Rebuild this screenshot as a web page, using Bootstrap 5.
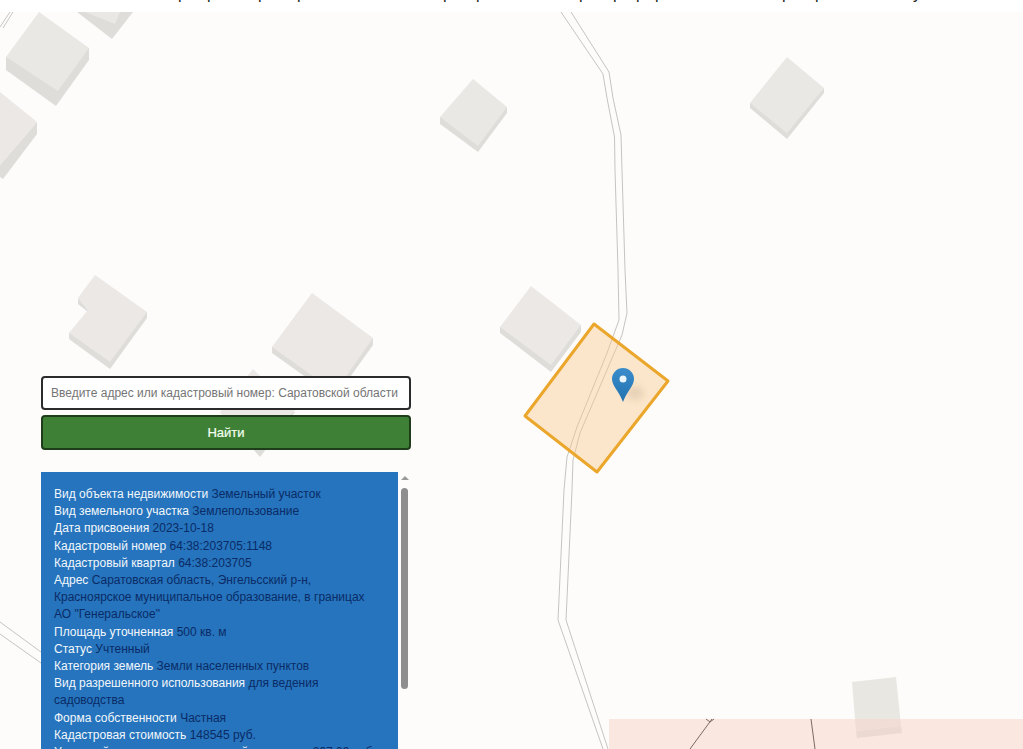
<!DOCTYPE html>
<html lang="ru">
<head>
<meta charset="utf-8">
<title>Кадастровая карта</title>
<link href="https://cdn.jsdelivr.net/npm/bootstrap@5.3.0/dist/css/bootstrap.min.css" rel="stylesheet">
<style>
html,body{height:100%;overflow:hidden;background:#fff;font-family:"Liberation Sans",Arial,sans-serif}
.top-strip{height:12px;overflow:hidden;background:#fff}
.top-strip svg,.map-canvas{display:block}
.top-strip text{font:16px "Liberation Sans",sans-serif;fill:#222}
.map-area{height:737px;background:#fdfcfa}
.roof{fill:#e9e8e4}.roof2{fill:#ebe8e6}.wall{fill:#dedddA}
.road{fill:none;stroke:#c6c4c1;stroke-width:1;stroke-linejoin:round}
.search-panel{left:41px;top:364px;width:370px;bottom:0}
.addr-input{height:34px;border:2px solid #2b2b2b;border-radius:4px;font-size:12px;padding:0 8px;color:#333;background:#fff}
.addr-input::placeholder{color:#757575;opacity:1}
.find-btn{height:35px;margin-top:5px;background:#3f8037;border:2px solid #1f3d1b;border-radius:4px;color:#f2fff0;font-size:13px;font-weight:500;padding:0;-webkit-text-stroke:.2px #f2fff0}
.find-btn:hover{background:#3f8037;color:#f2fff0;border-color:#1f3d1b}
.info-row{margin-top:22px;min-height:0}
.info-box{width:357px;background:#2574bd;padding:14px 15px 0 13px;font-size:12px;line-height:17.2px;color:#0b2b66;overflow:hidden}
.info-box .lab{color:#f3f7fb}
.scroll-col{width:13px;padding-left:3px}
.scroll-up{width:0;height:0;margin:4px 0 0 0;border-left:4px solid transparent;border-right:4px solid transparent;border-bottom:4px solid #9a9a9a}
.scroll-thumb{width:7px;height:201px;margin:8px 0 0 0;background:#8e8e8e;border-radius:4px}
</style>
</head>
<body>
<div class="top-strip">
<svg width="1023" height="12" viewBox="0 0 1023 12" aria-hidden="true"><text y="-1" x="178 207 258 297 443 476 579 613 636 655 782 815 913">рррррррррррру</text></svg>
</div>
<div class="map-area position-relative overflow-hidden">
<svg class="map-canvas" width="1023" height="737" viewBox="0 12 1023 737" aria-hidden="true">
<defs>
<linearGradient id="pinfill" x1="0" y1="0" x2="0" y2="1"><stop offset="0" stop-color="#3b8ccb"/><stop offset="1" stop-color="#2272b0"/></linearGradient>
<filter id="soft" x="-50%" y="-50%" width="200%" height="200%"><feGaussianBlur stdDeviation="3"/></filter>
</defs>
<path class="road" d="M0 27L10 12M3 28L13 12"/>
<path class="road" d="M0 622L41 652M0 634L41 663"/>
<path class="wall" d="M6 57V70L56 106L89 60V48Z"/><path class="roof" d="M39 12L89 48L58 91L6 57Z"/>
<path class="wall" d="M77 12L112 39L133 12Z"/><path class="roof" d="M85 12H120L115 24Z"/>
<path class="wall" d="M0 165L37 122V134L3 179L0 177Z"/><path class="roof2" d="M0 92L37 122L0 165Z"/>
<path class="wall" d="M440 117V124L478 152L507 113V107Z"/><path class="roof" d="M473 79L507 107L478 146L440 117Z"/>
<path class="wall" d="M750 103V108L787 139L824 93V88Z"/><path class="roof" d="M787 57L824 88L787 133L750 103Z"/>
<path class="wall" d="M500 327V333L551 372L581 332V325Z"/><path class="roof2" d="M531 286L581 325L551 365L500 327Z"/>
<path class="wall" d="M69 333V339L110 369L147 318V312ZM78 298V304L88 312V310Z"/><path class="roof2" d="M95 275L147 312L110 362L69 333L88 310L78 298Z"/>
<path class="wall" d="M272 347V353L335 398L373 345V338Z"/><path class="roof2" d="M312 293L373 338L335 392L272 347Z"/>
<path class="wall" d="M220 412L260 457L295 412Z"/><path class="roof2" d="M253 369L295 410L260 450L220 412Z"/>
<path class="wall" d="M856 731L857 738L902 733L901 726Z"/><path d="M852 682L896 677L901 726L856 731Z" fill="#e8e7e2"/>
<path class="road" d="M561 12L603 74L607 98L614.500 137L615 170L618 270L619 320L607 353L577 427L567 457L564 490L558 620L603 749"/>
<path class="road" d="M571 12L609 72L613 98L621 135L622 170L625 270L627 313L622 335L580 433L573 460L572 490L566 620L608 749"/>
<path d="M594 324L668 381L597 472L525 416Z" fill="#fbc98a" fill-opacity=".42" stroke="#eba62c" stroke-width="3" stroke-linejoin="round"/>
<rect x="609" y="719" width="414" height="30" fill="#f7d5cb" fill-opacity=".55"/>
<path d="M712 719L690 749M706 719L710 722L714 719M811 719L815 749" fill="none" stroke="#7d6a64" stroke-width="1"/>
<ellipse cx="635" cy="393" rx="9" ry="7" fill="#5a4a30" fill-opacity=".13" filter="url(#soft)"/>
<path d="M623 402C619 391 612 386 612 379A11 11 0 0 1 634 379C634 386 627 391 623 402Z" fill="url(#pinfill)"/>
<circle cx="623" cy="379" r="3.500" fill="#e9f5fb"/>
</svg>
<div class="search-panel position-absolute d-flex flex-column">
<input class="form-control addr-input flex-shrink-0" type="text" placeholder="Введите адрес или кадастровый номер: Саратовской области">
<button class="btn find-btn flex-shrink-0" type="button">Найти</button>
<div class="info-row d-flex flex-grow-1">
<div class="info-box">
<div><span class="lab">Вид объекта недвижимости</span> Земельный участок</div>
<div><span class="lab">Вид земельного участка</span> Землепользование</div>
<div><span class="lab">Дата присвоения</span> 2023-10-18</div>
<div><span class="lab">Кадастровый номер</span> 64:38:203705:1148</div>
<div><span class="lab">Кадастровый квартал</span> 64:38:203705</div>
<div><span class="lab">Адрес</span> Саратовская область, Энгельсский р-н, Красноярское муниципальное образование, в границах АО "Генеральское"</div>
<div><span class="lab">Площадь уточненная</span> 500 кв. м</div>
<div><span class="lab">Статус</span> Учтенный</div>
<div><span class="lab">Категория земель</span> Земли населенных пунктов</div>
<div><span class="lab">Вид разрешенного использования</span> для ведения садоводства</div>
<div><span class="lab">Форма собственности</span> Частная</div>
<div><span class="lab">Кадастровая стоимость</span> 148545 руб.</div>
<div><span class="lab">Удельный показатель кадастровой стоимости</span> 297,09 руб</div>
</div>
<div class="scroll-col flex-shrink-0">
<div class="scroll-up"></div>
<div class="scroll-thumb"></div>
</div>
</div>
</div>
</div>
<script src="https://cdn.jsdelivr.net/npm/bootstrap@5.3.0/dist/js/bootstrap.bundle.min.js"></script>
</body>
</html>
